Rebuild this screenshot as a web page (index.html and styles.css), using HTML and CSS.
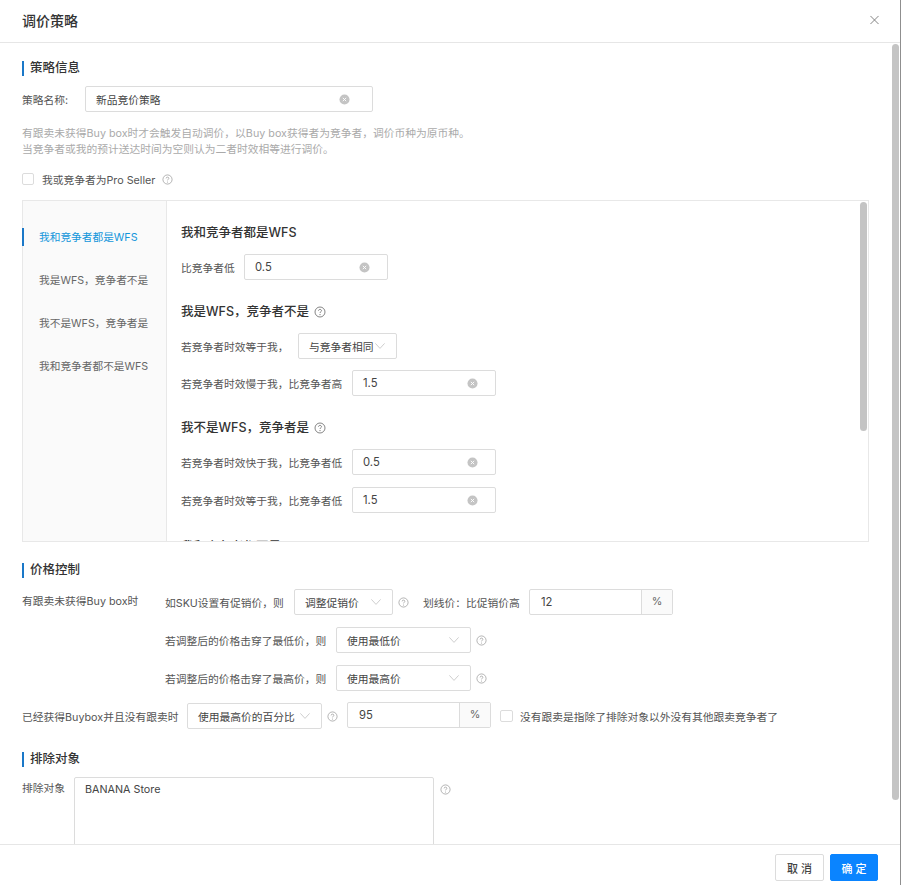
FILE: index.html
```html
<!DOCTYPE html>
<html lang="zh-CN">
<head>
<meta charset="utf-8">
<title>调价策略</title>
<link rel="stylesheet" href="styles.css">
</head>
<body>
<svg class="sprites" width="0" height="0" aria-hidden="true">
  <symbol id="clear" viewBox="0 0 12 12"><circle cx="6" cy="6" r="5.5" fill="#c4c4c4"/><path d="M4.2 4.2l3.6 3.6M7.8 4.2L4.2 7.8" stroke="#fff" stroke-width="1"/></symbol>
  <symbol id="chev" viewBox="0 0 10 6"><path d="M.4.4L5 5.400 9.600.4" fill="none" stroke="#c8c8c8" stroke-width=".9"/></symbol>
  <symbol id="help" viewBox="0 0 12 12"><circle cx="6" cy="6" r="5" fill="none" stroke="currentColor" stroke-width=".8"/><path d="M4.500 4.800C4.500 3.900 5.200 3.400 6 3.400S7.500 3.900 7.500 4.700C7.500 5.700 6 5.800 6 7" fill="none" stroke="currentColor" stroke-width=".8"/><circle cx="6" cy="8.600" r=".55" fill="currentColor"/></symbol>
</svg>
<div class="modal">
  <header class="modal-head">
    <h1>调价策略</h1>
    <svg class="close" viewBox="0 0 10 10"><path d="M.5.5l9 9M9.500.5l-9 9" stroke="#777" stroke-width="1" fill="none"/></svg>
  </header>
  <main class="modal-body">
    <h2 class="sec">策略信息</h2>
    <div class="row name-row">
      <span class="name-label">策略名称:</span>
      <div class="input w-name"><span>新品竞价策略</span><svg class="ic-clear"><use href="#clear"/></svg></div>
    </div>
    <p class="hint">有跟卖未获得Buy box时才会触发自动调价，以Buy box获得者为竞争者，调价币种为原币种。<br>当竞争者或我的预计送达时间为空则认为二者时效相等进行调价。</p>
    <label class="check pro"><i class="box"></i><span>我或竞争者为Pro Seller</span><svg class="ic-help ml-pro"><use href="#help"/></svg></label>

    <section class="panel">
      <nav class="side">
        <a class="active">我和竞争者都是WFS</a>
        <a>我是WFS，竞争者不是</a>
        <a>我不是WFS，竞争者是</a>
        <a>我和竞争者都不是WFS</a>
      </nav>
      <div class="pane">
        <h3 class="first">我和竞争者都是WFS</h3>
        <div class="row r1"><span class="lbl">比竞争者低</span><div class="input w-144"><span class="num">0.5</span><svg class="ic-clear"><use href="#clear"/></svg></div></div>
        <h3 class="h2nd">我是WFS，竞争者不是<svg class="ic-help big"><use href="#help"/></svg></h3>
        <div class="row r1"><span class="lbl wide-a">若竞争者时效等于我，</span><div class="select w-99"><span>与竞争者相同</span><svg class="ic-chev"><use href="#chev"/></svg></div></div>
        <div class="row r2"><span class="lbl wide-b">若竞争者时效慢于我，比竞争者高</span><div class="input w-144"><span class="num">1.5</span><svg class="ic-clear"><use href="#clear"/></svg></div></div>
        <h3 class="h3rd">我不是WFS，竞争者是<svg class="ic-help big"><use href="#help"/></svg></h3>
        <div class="row r1"><span class="lbl wide-b">若竞争者时效快于我，比竞争者低</span><div class="input w-144"><span class="num">0.5</span><svg class="ic-clear"><use href="#clear"/></svg></div></div>
        <div class="row r3"><span class="lbl wide-b">若竞争者时效等于我，比竞争者低</span><div class="input w-144"><span class="num">1.5</span><svg class="ic-clear"><use href="#clear"/></svg></div></div>
        <h3 class="h4th">我和竞争者都不是WFS<svg class="ic-help big"><use href="#help"/></svg></h3>
      </div>
      <div class="thumb-inner"></div>
    </section>

    <h2 class="sec sec-price">价格控制</h2>
    <div class="price">
      <span class="price-label">有跟卖未获得Buy box时</span>
      <div class="price-rows">
        <div class="row">
          <span class="l-129">如SKU设置有促销价，则</span>
          <div class="select w-99"><span>调整促销价</span><svg class="ic-chev"><use href="#chev"/></svg></div>
          <svg class="ic-help g-q"><use href="#help"/></svg>
          <span class="l-strike">划线价：比促销价高</span>
          <div class="addon w-144"><span class="val num">12</span><span class="unit">%</span></div>
        </div>
        <div class="row">
          <span class="l-171">若调整后的价格击穿了最低价，则</span>
          <div class="select w-135"><span>使用最低价</span><svg class="ic-chev"><use href="#chev"/></svg></div>
          <svg class="ic-help g-q"><use href="#help"/></svg>
        </div>
        <div class="row">
          <span class="l-171">若调整后的价格击穿了最高价，则</span>
          <div class="select w-135"><span>使用最高价</span><svg class="ic-chev"><use href="#chev"/></svg></div>
          <svg class="ic-help g-q"><use href="#help"/></svg>
        </div>
      </div>
    </div>
    <div class="row buybox">
      <span class="l-165">已经获得Buybox并且没有跟卖时</span>
      <div class="select w-135"><span>使用最高价的百分比</span><svg class="ic-chev"><use href="#chev"/></svg></div>
      <svg class="ic-help g-q2"><use href="#help"/></svg>
      <div class="addon w-144 raised"><span class="val num">95</span><span class="unit">%</span></div>
      <label class="check no-seller"><i class="box"></i><span>没有跟卖是指除了排除对象以外没有其他跟卖竞争者了</span></label>
    </div>

    <h2 class="sec sec-ex">排除对象</h2>
    <div class="exclude">
      <span class="ex-label">排除对象</span>
      <div class="textarea">BANANA Store</div>
      <svg class="ic-help ex-q"><use href="#help"/></svg>
    </div>
  </main>
  <footer class="modal-foot">
    <button class="btn">取 消</button>
    <button class="btn primary">确 定</button>
  </footer>
  <div class="thumb-outer"></div>
</div>
</body>
</html>
```

FILE: styles.css
```css
* { box-sizing: border-box; }
html, body { margin: 0; height: 100%; background: #fff; }
body { font-family: Inter, "Noto Sans CJK SC", sans-serif; font-size: 10.750px; color: #555; overflow: hidden; }
.sprites { position: absolute; }
.modal { position: relative; width: 901px; height: 885px; display: flex; flex-direction: column; border-right: 1px solid #8f8f8f; overflow: hidden; }
.modal::after { content: ""; position: absolute; right: -1px; top: 163px; width: 1px; height: 11px; background: #111; }
.modal-head { height: 43px; flex: none; display: flex; align-items: center; justify-content: space-between; padding: 0 22px 2px; border-bottom: 1px solid #e6e6e6; }
.modal-head h1 { margin: 0; font-size: 14px; font-weight: 500; color: #333; }
.close { width: 9px; height: 10px; margin-right: -1px; }
.modal-body { flex: 1; overflow: hidden; padding: 18px 32px 0 22px; }
.modal-foot { height: 41px; flex: none; border-top: 1px solid #e6e6e6; display: flex; justify-content: flex-end; gap: 6px; padding: 9px 22px 0 0; }
.sec { margin: 0; height: 15px; line-height: 14px; border-left: 2px solid #1a78c8; padding-left: 6px; font-size: 12.500px; font-weight: 500; color: #333; }
.row { display: flex; align-items: center; height: 26px; }
.name-row { margin-top: 10px; }
.name-label { width: 63px; }
.input, .select, .addon, .textarea { border: 1px solid #dcdcdc; border-radius: 2px; background: #fff; color: #444; }
.input, .select { height: 26px; display: flex; align-items: center; justify-content: space-between; padding: 0 10px; }
.w-name { width: 288px; padding-right: 22px; }
.w-144 { width: 144px; }
.w-99 { width: 99px; }
.w-135 { width: 135px; }
.input.w-144 { padding-right: 17px; }
.num { font-size: 11.250px; }
.ic-clear { width: 11px; height: 11px; flex: none; }
.ic-chev { width: 10px; height: 6px; margin-right: 1px; flex: none; }
.ic-help { width: 11px; height: 11px; flex: none; color: #999; }
.hint { margin: 14px 0 0; line-height: 16px; color: #aaa; }
.check { display: flex; align-items: center; }
.box { display: block; width: 12px; height: 12px; border: 1px solid #dcdcdc; border-radius: 2px; flex: none; }
.pro { margin-top: 14px; height: 14px; }
.pro span { margin-left: 8px; }
.ml-pro { margin-left: 7px; }
.panel { position: relative; margin-top: 14px; width: 847px; height: 342px; display: flex; border: 1px solid #e8e8e8; }
.side { width: 144px; flex: none; background: #fafafa; border-right: 1px solid #e8e8e8; padding-top: 15px; display: flex; flex-direction: column; }
.side a { display: block; height: 43px; line-height: 43px; padding-left: 16px; color: #666; white-space: nowrap; font-size: 10.700px; }
.side a.active { color: #1296db; position: relative; }
.side a.active::before { content: ""; position: absolute; left: -1px; top: 12px; width: 2px; height: 18px; background: #1a78c8; }
.pane { flex: 1; padding: 0 0 0 14px; min-width: 0; overflow: hidden; }
h3 { margin: 0 0 -1px; height: 16px; line-height: 16px; font-size: 12.500px; font-weight: 500; color: #333; display: flex; align-items: center; white-space: nowrap; }
h3.first { margin-top: 24px; }
.r1 { margin-top: 14px; }
.r2 { margin-top: 11px; }
.r3 { margin-top: 12px; }
.h2nd { margin-top: 24px; }
.h3rd { margin-top: 24px; }
.h4th { margin-top: 26px; }
.ic-help.big { width: 12px; height: 12px; margin-left: 5px; color: #666; }
.lbl { width: 63px; white-space: nowrap; }
.wide-a { width: 117px; }
.wide-b { width: 171px; }
.thumb-inner { position: absolute; right: 1px; top: 1px; width: 7px; height: 229px; border-radius: 4px; background: #c4c4c4; }
.thumb-outer { position: absolute; left: 892px; top: 44px; width: 7px; height: 756px; border-radius: 4px; background: #c4c4c4; }
.sec-price { margin-top: 21px; }
.price { display: flex; margin-top: 11px; }
.price-label { width: 143px; line-height: 26px; flex: none; white-space: nowrap; }
.price-rows { display: flex; flex-direction: column; gap: 12px; }
.l-129 { width: 129px; white-space: nowrap; }
.l-171 { width: 171px; white-space: nowrap; }
.l-strike { width: 106px; white-space: nowrap; }
.l-165 { width: 165px; white-space: nowrap; }
.g-q { margin: 0 14px 0 5px; }
.g-q2 { margin: 0 9px 0 5px; }
.addon { height: 26px; display: flex; }
.addon.raised { margin-bottom: 2px; }
.addon .val { flex: 1; line-height: 24px; padding-left: 11px; }
.addon .unit { width: 31px; border-left: 1px solid #dcdcdc; background: #fafafa; text-align: center; line-height: 24px; color: #666; }
.buybox { margin-top: 12px; }
.no-seller { margin-left: 9px; }
.no-seller .box { width: 13px; }
.no-seller span { margin-left: 7px; }
.sec-ex { margin-top: 23px; }
.exclude { display: flex; margin-top: 10px; }
.ex-label { width: 52px; line-height: 24px; flex: none; }
.textarea { width: 360px; height: 100px; padding: 5px 10px; line-height: 14px; }
.ex-q { margin: 7px 0 0 6px; }
.btn { height: 27px; border: 1px solid #dcdcdc; border-radius: 2px; background: #fff; color: #444; font: 500 11px Inter, "Noto Sans CJK SC", sans-serif; width: 49px; padding: 0; }
.btn.primary { border-color: #0a84ff; background: #0a84ff; color: #fff; width: 48px; }
```
